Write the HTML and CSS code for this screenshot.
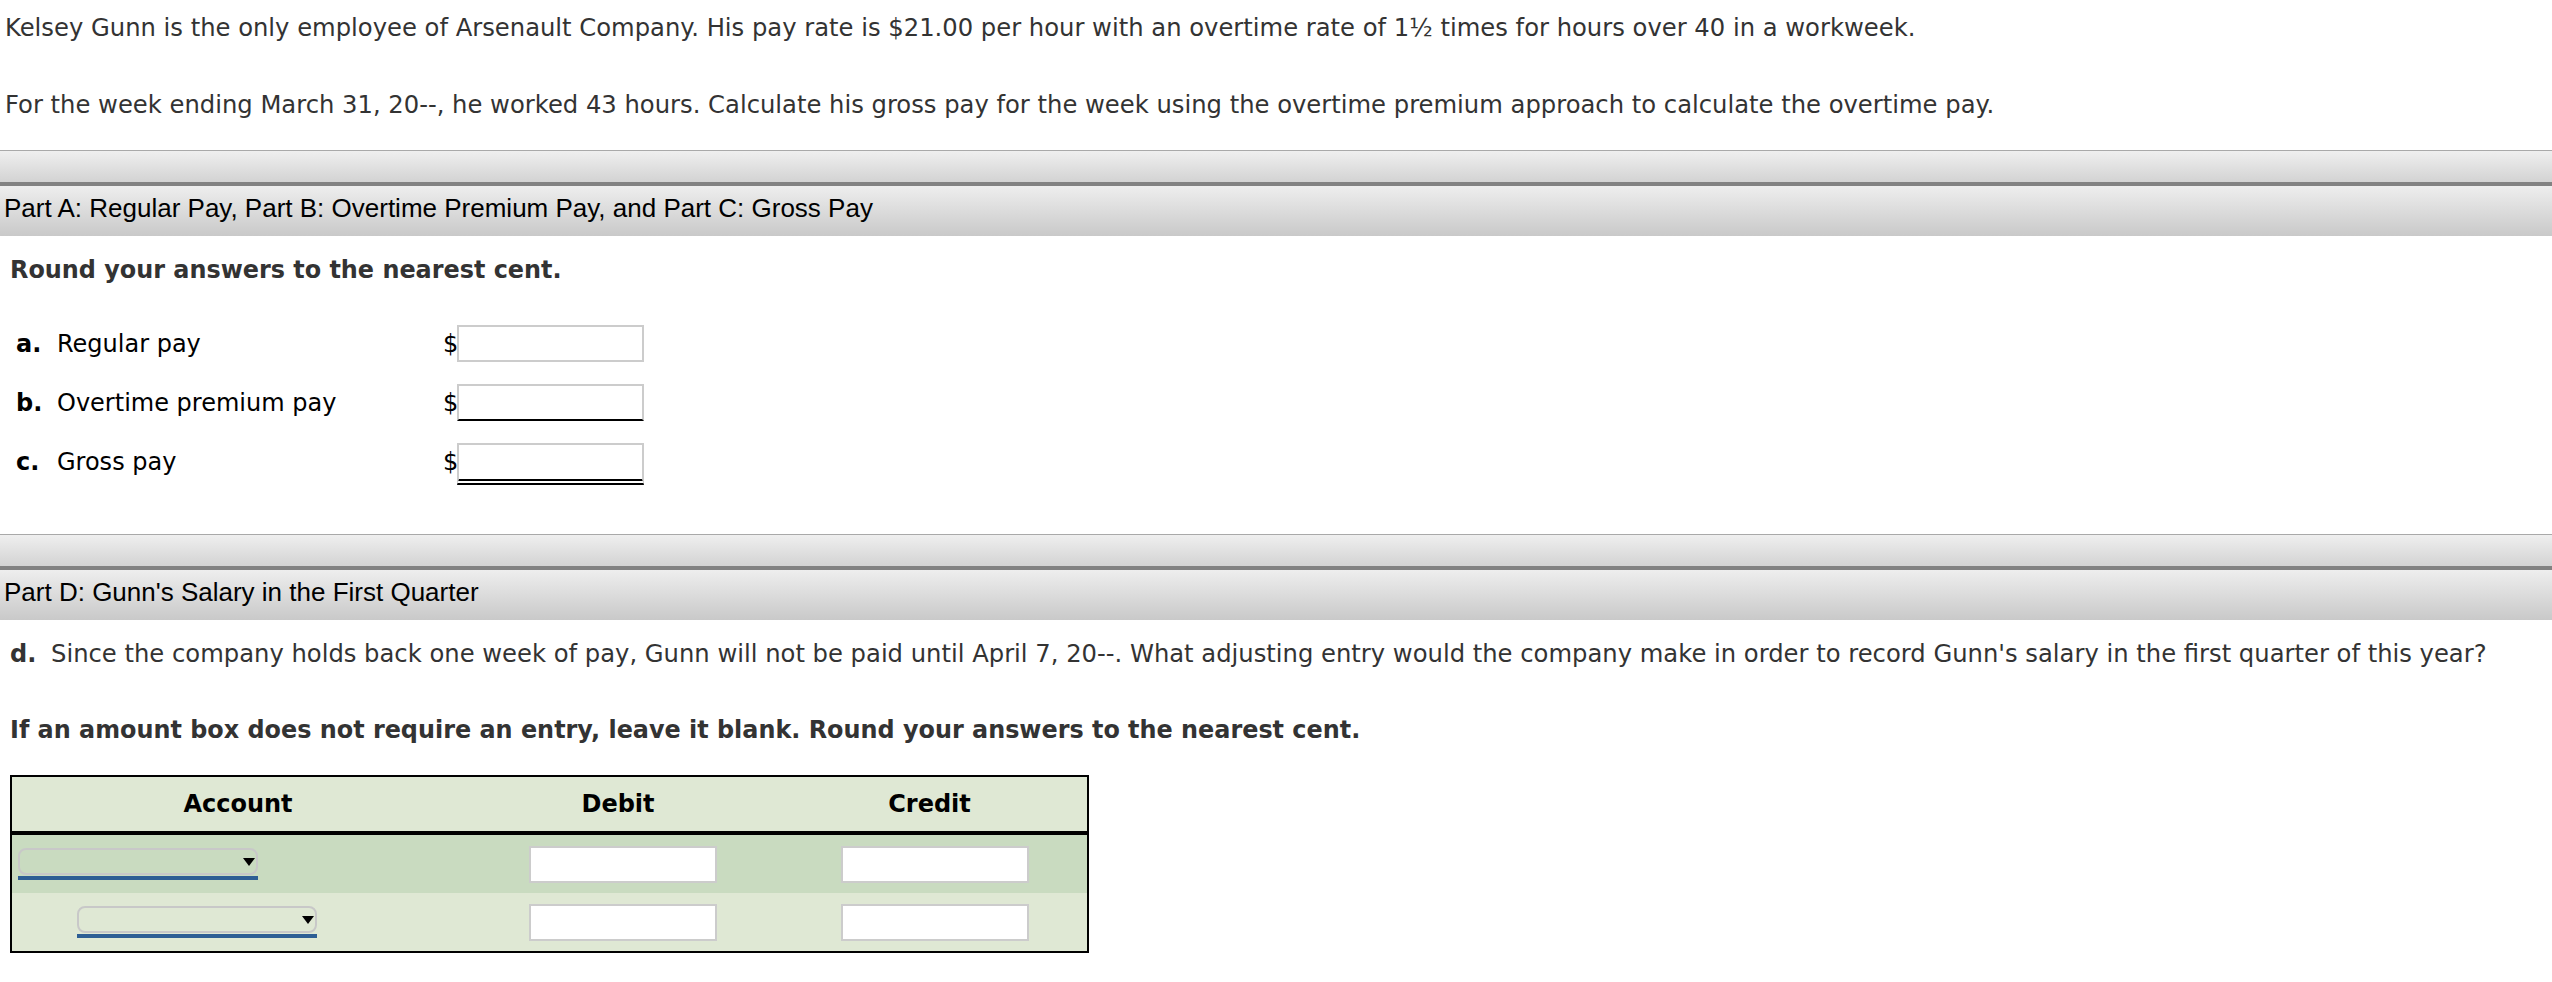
FILE: index.html
```html
<!DOCTYPE html>
<html>
<head>
<meta charset="utf-8">
<link rel="stylesheet" href="styles.css">
</head>
<body>
<div class="intro">
  <p class="p1">Kelsey Gunn is the only employee of Arsenault Company. His pay rate is $21.00 per hour with an overtime rate of 1½ times for hours over 40 in a workweek.</p>
  <p class="p2">For the week ending March 31, 20--, he worked 43 hours. Calculate his gross pay for the week using the overtime premium approach to calculate the overtime pay.</p>
</div>

<section class="part part-a">
  <div class="band"></div>
  <div class="part-head">Part A: Regular Pay, Part B: Overtime Premium Pay, and Part C: Gross Pay</div>
  <p class="instr first">Round your answers to the nearest cent.</p>
  <div class="rows">
    <div class="row">
      <div class="label"><b class="key">a.</b>Regular pay</div>
      <span class="dollar">$</span><span class="field"></span>
    </div>
    <div class="row">
      <div class="label"><b class="key">b.</b>Overtime premium pay</div>
      <span class="dollar">$</span><span class="field single"></span>
    </div>
    <div class="row">
      <div class="label"><b class="key">c.</b>Gross pay</div>
      <span class="dollar">$</span><span class="field double"></span>
    </div>
  </div>
</section>

<section class="part part-d">
  <div class="band"></div>
  <div class="part-head">Part D: Gunn's Salary in the First Quarter</div>
  <p class="question"><b class="key">d.</b>Since the company holds back one week of pay, Gunn will not be paid until April 7, 20--. What adjusting entry would the company make in order to record Gunn's salary in the first quarter of this year?</p>
  <p class="instr second">If an amount box does not require an entry, leave it blank. Round your answers to the nearest cent.</p>

  <div class="journal">
    <div class="jhead">
      <div class="c-acct">Account</div>
      <div class="c-deb">Debit</div>
      <div class="c-cred">Credit</div>
    </div>
    <div class="jrow dark">
      <div class="c-acct">
        <div class="select-wrap"><div class="select"><svg class="arrow" width="12" height="8" viewBox="0 0 12 8"><path d="M0 0H12L6 8Z" fill="#000"/></svg></div></div>
      </div>
      <div class="c-deb"><span class="tfield"></span></div>
      <div class="c-cred"><span class="tfield"></span></div>
    </div>
    <div class="jrow light">
      <div class="c-acct indent">
        <div class="select-wrap"><div class="select"><svg class="arrow" width="12" height="8" viewBox="0 0 12 8"><path d="M0 0H12L6 8Z" fill="#000"/></svg></div></div>
      </div>
      <div class="c-deb"><span class="tfield"></span></div>
      <div class="c-cred"><span class="tfield"></span></div>
    </div>
  </div>
</section>
</body>
</html>
```

FILE: styles.css
```css
body {
  margin: 0;
  font-family: Verdana, "DejaVu Sans", sans-serif;
  font-size: 24.25px;
  color: #333;
  background: #fff;
}

p { margin: 0; line-height: 28px; }

.intro p { padding-left: 5px; }
.p1 { margin-top: 14px; }
.p2 { margin-top: 49px; }

.part-a { margin-top: 31px; }
.part-d { margin-top: 43px; }

.band {
  height: 31px;
  border-top: 1px solid #a9a9a9;
  background: linear-gradient(#efefef, #d3d3d3);
}

.part-head {
  height: 54px;
  box-sizing: border-box;
  border-top: 4px solid #828282;
  background: linear-gradient(#eeeeee, #c9c9c9);
  font-family: "Liberation Sans", Arial, sans-serif;
  font-size: 26px;
  color: #000;
  line-height: 44px;
  padding-left: 4px;
}

.instr { font-weight: bold; font-size: 23.9px; padding-left: 10px; }
.instr.first { margin-top: 20px; }
.instr.second { margin-top: 48px; }

.key { font-weight: bold; display: inline-block; width: 41px; font-size: 24px; }

.rows { margin-top: 30px; }
.row {
  display: flex;
  align-items: center;
  height: 59px;
  color: #000;
  font-size: 24px;
}
.label { width: 427px; padding-left: 16px; }
.dollar { width: 14px; }

.field {
  display: block;
  width: 187px;
  height: 37px;
  box-sizing: border-box;
  border: 2px solid #cccccc;
  background: #fff;
}
.field.single { border-bottom: 2px solid #000; }
.field.double { height: 42px; border-bottom: 6px double #000; margin-top: 5px; }

.question { margin-top: 20px; padding-left: 10px; }

.journal {
  margin: 31px 0 0 10px;
  width: 1079px;
  box-sizing: border-box;
  border: 2px solid #000;
  background: #dfe8d4;
}
.jhead {
  display: flex;
  height: 58px;
  box-sizing: border-box;
  border-bottom: 4px solid #000;
  font-weight: bold;
  font-size: 24px;
  color: #000;
  align-items: center;
  text-align: center;
}
.c-acct { width: 452px; }
.c-deb { width: 308px; }
.c-cred { width: 315px; }

.jrow {
  display: flex;
  height: 58px;
  align-items: center;
}
.jrow.dark { background: #c9dbc0; }
.jrow .c-acct { padding-left: 6px; box-sizing: border-box; }
.jrow .c-acct.indent { padding-left: 65px; }
.jrow .c-deb, .jrow .c-cred { padding-left: 10px; box-sizing: border-box; display: flex; justify-content: center; }

.tfield {
  display: block;
  width: 188px;
  height: 37px;
  box-sizing: border-box;
  border: 2px solid #cccccc;
  background: #fff;
}

.select-wrap {
  width: 240px;
  padding-bottom: 1px;
  border-bottom: 4px solid #2d5e94;
}
.select {
  height: 27px;
  box-sizing: border-box;
  border: 2px solid #c8c8c8;
  border-radius: 8px;
  display: flex;
  align-items: center;
  justify-content: flex-end;
  padding-right: 1px;
}
.arrow { display: block; }
```
